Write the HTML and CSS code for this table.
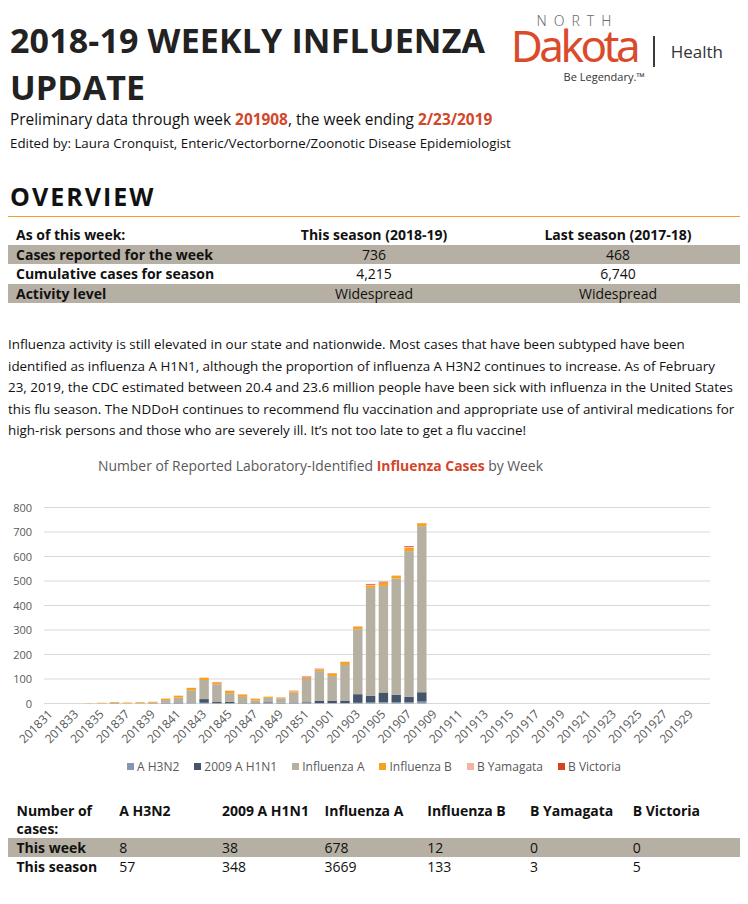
FILE: index.html
```html
<!DOCTYPE html>
<html lang="en">
<head>
<meta charset="utf-8">
<title>2018-19 Weekly Influenza Update</title>
<link rel="stylesheet" href="styles.css">
</head>
<body>
<div class="page">
  <header class="masthead">
    <h1 class="title">2018-19 WEEKLY INFLUENZA UPDATE</h1>
    <div class="logo">
      <div class="logo-mark">
        <span class="logo-north">NORTH</span>
        <span class="logo-dakota">Dakota</span>
        <span class="logo-tag">Be Legendary.&#8482;</span>
      </div>
      <span class="logo-divider"></span>
      <span class="logo-health">Health</span>
    </div>
  </header>
  <p class="subtitle">Preliminary data through week <strong class="accent">201908</strong>, the week ending <strong class="accent">2/23/2019</strong></p>
  <p class="editor">Edited by: Laura Cronquist, Enteric/Vectorborne/Zoonotic Disease Epidemiologist</p>

  <h2 class="section-title">OVERVIEW</h2>
  <table class="overview">
    <thead>
      <tr><th class="left">As of this week:</th><th>This season (2018-19)</th><th>Last season (2017-18)</th></tr>
    </thead>
    <tbody>
      <tr class="shade"><th class="left">Cases reported for the week</th><td>736</td><td>468</td></tr>
      <tr><th class="left">Cumulative cases for season</th><td>4,215</td><td>6,740</td></tr>
      <tr class="shade"><th class="left">Activity level</th><td>Widespread</td><td>Widespread</td></tr>
    </tbody>
  </table>

  <p class="summary">Influenza activity is still elevated in our state and nationwide. Most cases that have been subtyped have been<br>
identified as influenza A H1N1, although the proportion of influenza A H3N2 continues to increase. As of February<br>
23, 2019, the CDC estimated between 20.4 and 23.6 million people have been sick with influenza in the United States<br>
this flu season. The NDDoH continues to recommend flu vaccination and appropriate use of antiviral medications for<br>
high-risk persons and those who are severely ill. It&#8217;s not too late to get a flu vaccine!</p>

  <figure class="chart">
    <figcaption class="chart-title">Number of Reported Laboratory-Identified <strong class="accent">Influenza Cases</strong> by Week</figcaption>
    <svg id="chart" class="chart-svg" width="732" height="284" viewBox="8 476 732 284" xmlns="http://www.w3.org/2000/svg"></svg>
    <ul class="legend">
      <li><span class="swatch h3n2"></span>A H3N2</li>
      <li><span class="swatch h1n1"></span>2009 A H1N1</li>
      <li><span class="swatch flua"></span>Influenza A</li>
      <li><span class="swatch flub"></span>Influenza B</li>
      <li><span class="swatch yam"></span>B Yamagata</li>
      <li><span class="swatch vic"></span>B Victoria</li>
    </ul>
  </figure>

  <table class="cases">
    <colgroup>
      <col class="col"><col class="col"><col class="col"><col class="col"><col class="col"><col class="col"><col class="col-last">
    </colgroup>
    <thead>
      <tr><th class="wrap">Number of cases:</th><th>A H3N2</th><th>2009 A H1N1</th><th>Influenza A</th><th>Influenza B</th><th>B Yamagata</th><th>B Victoria</th></tr>
    </thead>
    <tbody>
      <tr class="shade"><th>This week</th><td>8</td><td>38</td><td>678</td><td>12</td><td>0</td><td>0</td></tr>
      <tr><th>This season</th><td>57</td><td>348</td><td>3669</td><td>133</td><td>3</td><td>5</td></tr>
    </tbody>
  </table>
</div>
<script src="script.js"></script>
</body>
</html>
```

FILE: styles.css
```css
* { box-sizing: border-box; }

body {
  margin: 0;
  background: #ffffff;
  color: #111111;
  font-family: "Open Sans", "Noto Sans", sans-serif;
}

.page {
  width: 748px;
  padding: 0 8px;
}

.accent { color: #d2472a; font-weight: 700; }

/* ---------- masthead ---------- */
.masthead {
  display: flex;
  justify-content: space-between;
  align-items: flex-start;
  padding-top: 17px;
}

.title {
  flex: 1;
  margin: 0;
  font-size: 34px;
  line-height: 47px;
  font-weight: 700;
  letter-spacing: 0.15px;
  color: #222222;
  padding-left: 2px;
}

.logo {
  display: flex;
  align-items: flex-start;
  margin-top: -3.5px;
  margin-right: 17px;
  flex-shrink: 0;
}

.logo-mark {
  display: flex;
  flex-direction: column;
  align-items: center;
}

.logo-north {
  font-family: "Noto Sans", "Open Sans", sans-serif;
  font-weight: 300;
  font-size: 14px;
  line-height: 14px;
  letter-spacing: 7px;
  margin-right: -7px;
  color: #6b6b6b;
}

.logo-dakota {
  font-family: "Noto Sans", "Open Sans", sans-serif;
  font-size: 44px;
  line-height: 36px;
  letter-spacing: -3.5px;
  color: #da4b2b;
  margin-top: -1px;
}

.logo-tag {
  align-self: flex-end;
  margin-right: -7.5px;
  margin-top: 7px;
  font-size: 11px;
  line-height: 14px;
  color: #333333;
}

.logo-divider {
  width: 1.5px;
  height: 31px;
  margin: 22px 16px 0 16px;
  background: #3a3a3a;
}

.logo-health {
  margin-top: 28px;
  font-size: 17px;
  line-height: 20px;
  color: #333333;
}

.subtitle {
  margin: 0;
  padding-left: 2px;
  font-size: 15.4px;
  line-height: 18px;
  color: #111111;
}

.editor {
  margin: 4px 0 0 0;
  padding-left: 2px;
  font-size: 13.3px;
  line-height: 20px;
  color: #111111;
}

/* ---------- overview ---------- */
.section-title {
  margin: 28px 0 0 0;
  padding: 0 0 5px 2px;
  font-size: 25px;
  line-height: 30px;
  font-weight: 700;
  letter-spacing: 2px;
  color: #111111;
  border-bottom: 1px solid #f2a11f;
}

table {
  width: 732px;
  border-collapse: collapse;
  border-spacing: 0;
  table-layout: fixed;
  font-size: 14px;
}

.overview { margin-top: 8px; }

.overview th,
.overview td {
  height: 19.5px;
  line-height: 19.5px;
  padding: 0 8px;
  text-align: center;
  font-weight: 400;
  white-space: nowrap;
}

.overview th { font-weight: 700; }
.overview .left { text-align: left; }

.shade { background: #b6b0a4; }

.summary {
  margin: 31px 0 0 0;
  font-size: 13.4px;
  line-height: 21.5px;
  white-space: nowrap;
  color: #111111;
}

/* ---------- chart ---------- */
.chart { margin: 0; }

.chart-title {
  margin-top: 14px;
  padding-left: 90px;
  font-size: 13.9px;
  line-height: 20px;
  color: #595959;
}

.chart-svg { display: block; }

.chart-svg .grid { stroke: #d9d9d9; stroke-width: 1; }

.chart-svg .tick {
  font-family: "Open Sans", "Noto Sans", sans-serif;
  fill: #595959;
}
.chart-svg .ytick { font-size: 11px; }
.chart-svg .xtick { font-size: 12px; }

.legend {
  display: flex;
  justify-content: center;
  gap: 15px;
  list-style: none;
  margin: -1px 0 0 0;
  padding: 0;
  font-size: 12px;
  line-height: 16px;
  color: #595959;
}

.legend li { display: flex; align-items: center; }

.swatch {
  width: 7px;
  height: 7px;
  margin-right: 3px;
}

.h3n2 { background: #8497b0; }
.h1n1 { background: #44546a; }
.flua { background: #b6b0a3; }
.flub { background: #f7a21b; }
.yam  { background: #f4b4a4; }
.vic  { background: #d5441f; }

/* ---------- cases table ---------- */
.cases { margin-top: 27px; }

.cases .col { width: 102.7px; }

.cases th,
.cases td {
  padding: 0 0 0 8.5px;
  text-align: left;
  font-weight: 400;
  line-height: 19px;
  height: 19px;
  white-space: nowrap;
}

.cases th { font-weight: 700; }

.cases thead th {
  vertical-align: top;
  line-height: 18px;
  height: 36px;
}

.cases .wrap {
  white-space: normal;
  padding-right: 8px;
}
```

FILE: script.js
```js
(function () {
  var NS = 'http://www.w3.org/2000/svg';
  var svg = document.getElementById('chart');

  var X0 = 44, X1 = 710, Y0 = 703.5, K = 0.245;
  var STEP = (X1 - X0) / 52, BAR = 9.4;
  var colors = ['#8497b0', '#44546a', '#b6b0a3', '#f7a21b', '#f4b4a4', '#d5441f'];

  var weeks = [];
  for (var w = 31; w <= 52; w++) weeks.push('2018' + w);
  for (var v = 1; v <= 30; v++) weeks.push('2019' + (v < 10 ? '0' + v : v));

  // [A H3N2, 2009 A H1N1, Influenza A, Influenza B, B Yamagata, B Victoria]
  var counts = [
    [0,0,0,0,0,0],[0,0,0,0,0,0],[0,0,0,0,0,0],[0,0,0,1,0,0],
    [0,0,1,2,0,0],[0,1,2,3,0,0],[0,0,1,3,0,0],[0,0,2,3,0,0],
    [0,1,2,4,0,0],[1,2,11,6,0,0],[1,3,20,8,0,0],[2,2,50,10,0,0],
    [3,15,78,9,1,0],[1,5,72,6,3,1],[1,6,35,10,1,0],[1,1,25,10,1,0],
    [1,1,10,8,0,0],[1,4,18,5,0,0],[1,2,18,4,0,0],[1,3,40,6,1,1],
    [1,4,95,4,3,3],[2,10,120,6,2,2],[2,10,100,10,1,1],[2,10,145,12,0,1],
    [3,35,265,10,0,1],[4,28,440,10,3,3],[5,40,435,12,2,3],[5,30,475,12,0,0],
    [5,22,595,14,3,3],[8,38,678,12,0,0]
  ];

  function el(tag, attrs, text) {
    var n = document.createElementNS(NS, tag);
    for (var k in attrs) n.setAttribute(k, attrs[k]);
    if (text != null) n.textContent = text;
    svg.appendChild(n);
    return n;
  }

  for (var g = 0; g <= 800; g += 100) {
    var y = Y0 - g * K;
    el('line', { x1: X0, x2: X1, y1: y, y2: y, 'class': 'grid' });
    el('text', { x: 32, y: y + 4, 'text-anchor': 'end', 'class': 'tick ytick' }, String(g));
  }

  counts.forEach(function (row, i) {
    var x = X0 + i * STEP + (STEP - BAR) / 2;
    var base = Y0;
    row.forEach(function (n, s) {
      if (!n) return;
      var h = n * K;
      el('rect', { x: x, y: base - h, width: BAR, height: h, fill: colors[s] });
      base -= h;
    });
  });

  weeks.forEach(function (wk, i) {
    if (i % 2) return;
    var cx = X0 + (i + 0.5) * STEP + 3, cy = 715;
    el('text', {
      x: cx, y: cy, 'text-anchor': 'end', 'class': 'tick xtick',
      transform: 'rotate(-45 ' + cx + ' ' + cy + ')'
    }, wk);
  });
})();
```
